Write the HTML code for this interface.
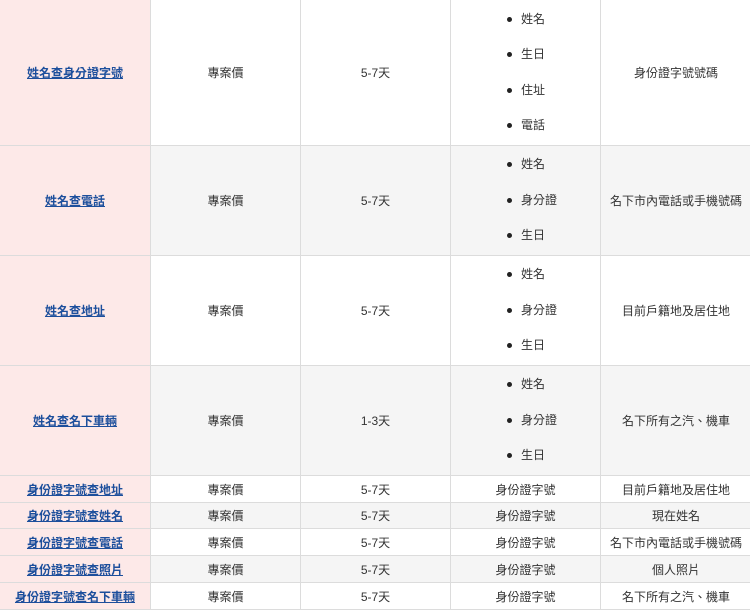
<!DOCTYPE html>
<html><head><meta charset="utf-8"><style>
body{margin:0;width:750px;height:605px;overflow:hidden;background:#fff;font-family:"Liberation Sans","Noto Sans CJK TC",sans-serif;font-size:12px;color:#333}
table{position:absolute;left:-1px;top:-1px;border-collapse:collapse;table-layout:fixed;width:752px}
td{border:1px solid #dcdcdc;text-align:center;vertical-align:middle;padding:0;overflow:hidden}
td.h{background:#fde9e8}
td.h a{color:#1d4f9c;font-weight:bold;text-decoration:underline}
tr.g td{background:#f5f5f5}
tr.g td.h{background:#fde9e8}
ul{list-style:none;margin:0;padding:0;text-align:left}
li{position:relative;padding-left:70px;height:35.5px;line-height:35.5px}
li:before{content:"";position:absolute;left:56px;top:15px;width:5px;height:5px;border-radius:50%;background:#222}
</style></head><body>
<table>
<colgroup><col style="width:151px"><col style="width:150px"><col style="width:150px"><col style="width:150px"><col style="width:151px"></colgroup>
<tr style="height:146px"><td class="h"><a>姓名查身分證字號</a></td><td>專案價</td><td>5-7天</td><td><ul><li>姓名</li><li>生日</li><li>住址</li><li>電話</li></ul></td><td>身份證字號號碼</td></tr>
<tr class="g" style="height:110px"><td class="h"><a>姓名查電話</a></td><td>專案價</td><td>5-7天</td><td><ul><li>姓名</li><li>身分證</li><li>生日</li></ul></td><td>名下市內電話或手機號碼</td></tr>
<tr style="height:110px"><td class="h"><a>姓名查地址</a></td><td>專案價</td><td>5-7天</td><td><ul><li>姓名</li><li>身分證</li><li>生日</li></ul></td><td>目前戶籍地及居住地</td></tr>
<tr class="g" style="height:110px"><td class="h"><a>姓名查名下車輛</a></td><td>專案價</td><td>1-3天</td><td><ul><li>姓名</li><li>身分證</li><li>生日</li></ul></td><td>名下所有之汽、機車</td></tr>
<tr style="height:27px"><td class="h"><a>身份證字號查地址</a></td><td>專案價</td><td>5-7天</td><td>身份證字號</td><td>目前戶籍地及居住地</td></tr>
<tr class="g" style="height:26px"><td class="h"><a>身份證字號查姓名</a></td><td>專案價</td><td>5-7天</td><td>身份證字號</td><td>現在姓名</td></tr>
<tr style="height:27px"><td class="h"><a>身份證字號查電話</a></td><td>專案價</td><td>5-7天</td><td>身份證字號</td><td>名下市內電話或手機號碼</td></tr>
<tr class="g" style="height:27px"><td class="h"><a>身份證字號查照片</a></td><td>專案價</td><td>5-7天</td><td>身份證字號</td><td>個人照片</td></tr>
<tr style="height:27px"><td class="h"><a>身份證字號查名下車輛</a></td><td>專案價</td><td>5-7天</td><td>身份證字號</td><td>名下所有之汽、機車</td></tr>
</table>
</body></html>
